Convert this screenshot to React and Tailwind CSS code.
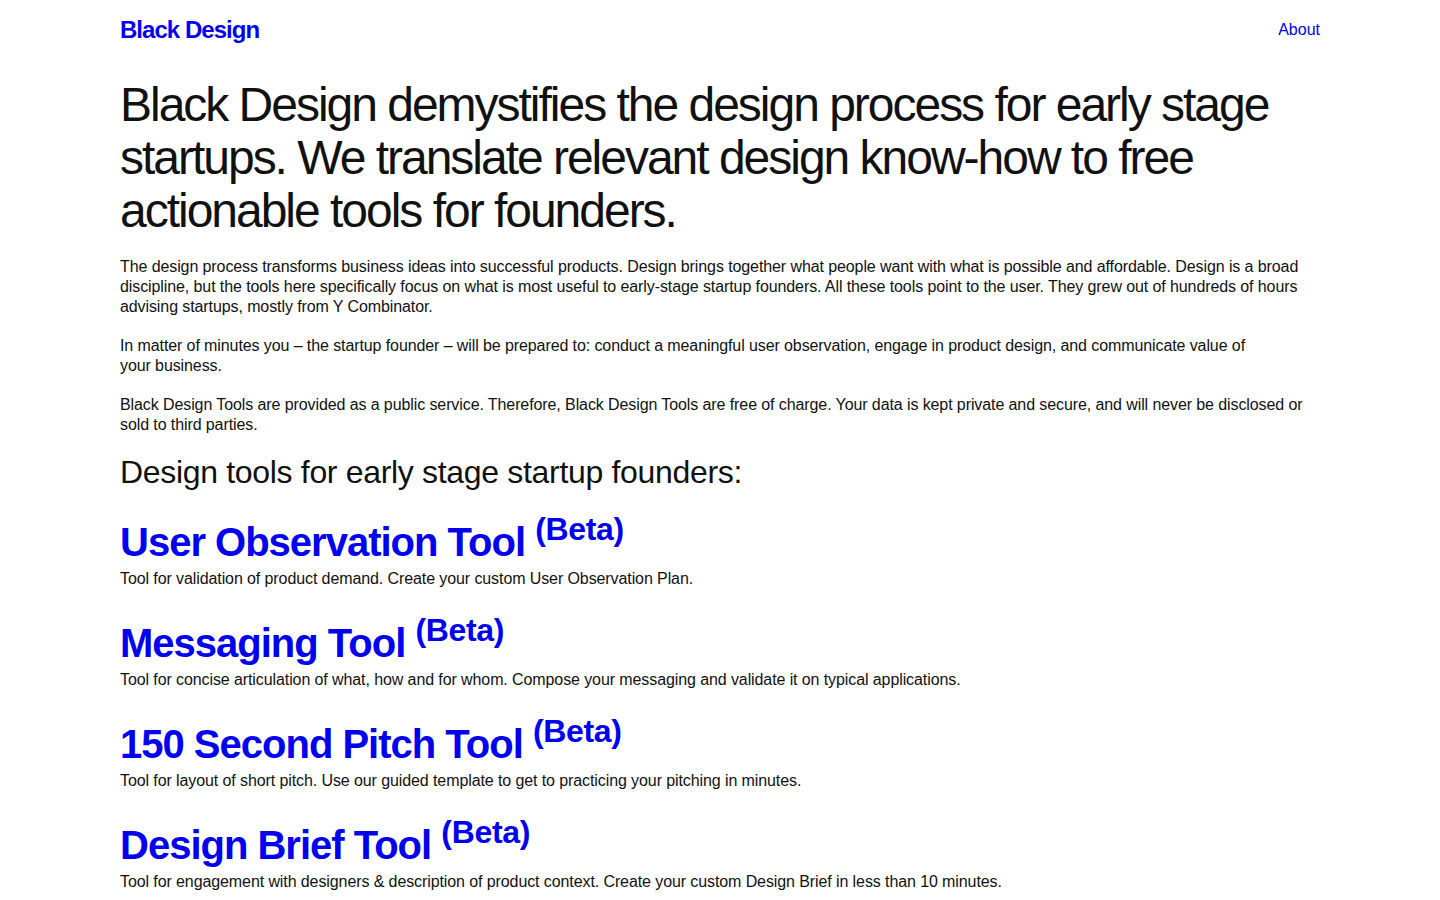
export default function App() {
  const tools = [
    {
      name: 'User Observation Tool',
      desc: 'Tool for validation of product demand. Create your custom User Observation Plan.',
    },
    {
      name: 'Messaging Tool',
      desc: 'Tool for concise articulation of what, how and for whom. Compose your messaging and validate it on typical applications.',
    },
    {
      name: '150 Second Pitch Tool',
      desc: 'Tool for layout of short pitch. Use our guided template to get to practicing your pitching in minutes.',
    },
    {
      name: 'Design Brief Tool',
      desc: 'Tool for engagement with designers & description of product context. Create your custom Design Brief in less than 10 minutes.',
    },
  ];

  return (
    <div className="min-h-screen bg-white text-[#111] font-['Liberation_Sans',Arial,sans-serif]">
      <div className="mx-auto w-[1200px]">
        <header className="flex items-center justify-between h-[60px]">
          <a href="#" className="text-[24px] font-bold tracking-[-0.04em] text-[#0000ee]">
            Black Design
          </a>
          <a href="#" className="text-[16px] text-[#0000ee]">
            About
          </a>
        </header>

        <h1 className="mt-[18px] text-[48px] leading-[53px] tracking-[-0.042em] pr-[20px]">
          Black Design demystifies the design process for early stage startups. We translate relevant design know-how to free actionable tools for founders.
        </h1>

        <div className="mt-[20px] text-[16px] leading-[20px] tracking-[-0.006em] space-y-[19px]">
          <p>
            The design process transforms business ideas into successful products. Design brings together what people want with what is possible and affordable. Design is a broad discipline, but the tools here specifically focus on what is most useful to early-stage startup founders. All these tools point to the user. They grew out of hundreds of hours advising startups, mostly from Y Combinator.
          </p>
          <p>
            In matter of minutes you – the startup founder – will be prepared to: conduct a meaningful user observation, engage in product design, and communicate value of
            <br />
            your business.
          </p>
          <p>
            Black Design Tools are provided as a public service. Therefore, Black Design Tools are free of charge. Your data is kept private and secure, and will never be disclosed or sold to third parties.
          </p>
        </div>

        <h2 className="mt-[17px] text-[32px] leading-[40px] tracking-[-0.01em]">
          Design tools for early stage startup founders:
        </h2>

        <div className="mt-[28px] space-y-[32px]">
          {tools.map((t) => (
            <div key={t.name}>
              <a href="#" className="block text-[40px] leading-[44px] font-bold tracking-[-0.025em] text-[#0000ee]">
                {t.name}{' '}
                <sup className="text-[32px] tracking-[-0.01em]">(Beta)</sup>
              </a>
              <p className="mt-[5px] text-[16px] leading-[20px] tracking-[-0.006em]">{t.desc}</p>
            </div>
          ))}
        </div>
      </div>
    </div>
  );
}
